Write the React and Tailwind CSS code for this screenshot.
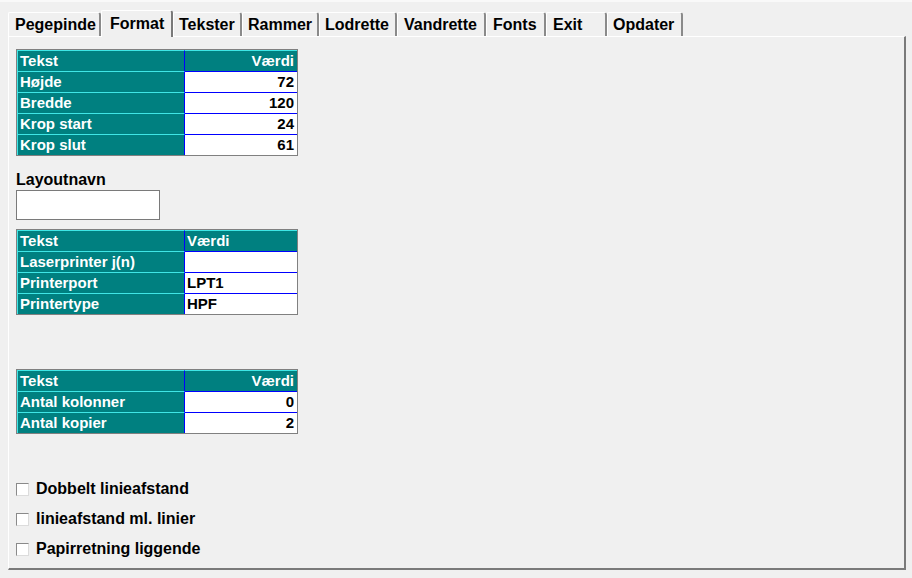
import React from "react";

const tabs = [
  { label: "Pegepinde", w: "w-[93px]", pl: "pl-[6px]" },
  { label: "Format", w: "w-[72px]", pl: "pl-[8px]", selected: true },
  { label: "Tekster", w: "w-[69px]", pl: "pl-[5px]" },
  { label: "Rammer", w: "w-[77px]", pl: "pl-[5px]" },
  { label: "Lodrette", w: "w-[78px]", pl: "pl-[5px]" },
  { label: "Vandrette", w: "w-[89px]", pl: "pl-[6px]" },
  { label: "Fonts", w: "w-[60px]", pl: "pl-[6px]" },
  { label: "Exit", w: "w-[61px]", pl: "pl-[6px]" },
  { label: "Opdater", w: "w-[76px]", pl: "pl-[5px]" },
];

function Tab({ label, w, pl, selected }) {
  if (selected) {
    return (
      <div
        className={`${w} ${pl} h-[27px] -mb-[1px] pt-[1px] bg-[#f0f0f0] border-t border-l border-white border-r-2 border-r-[#7a7a7a] rounded-tl-[2px] rounded-tr-[3px] relative z-10`}
      >
        <span className="text-[16px] leading-[18px] font-bold text-black">{label}</span>
      </div>
    );
  }
  return (
    <div
      className={`${w} ${pl} h-[24px] pt-[0px] bg-[#f0f0f0] border-t border-l border-white border-r-2 border-r-[#8a8a8a] rounded-tl-[2px] rounded-tr-[3px]`}
    >
      <span className="text-[16px] leading-[18px] font-bold text-black">{label}</span>
    </div>
  );
}

function Table({ rows, headerAlign = "right", valueAlign = "right" }) {
  const all = [{ k: "Tekst", v: "Værdi", header: true }, ...rows];
  return (
    <div className="w-[282px] border border-[#808080] grid grid-cols-[168px_112px] text-[15px] leading-[20px] font-bold">
      {all.map((r, i) => (
        <React.Fragment key={i}>
          <div className="bg-[#008080] text-white border-t border-l border-[#3fe6e6] border-r border-r-[#0000ff] pl-[2px] h-[21px] whitespace-nowrap overflow-hidden">
            {r.k}
          </div>
          <div
            className={`h-[21px] border-t whitespace-nowrap overflow-hidden ${
              r.header
                ? "bg-[#008080] text-white border-[#3fe6e6]"
                : "bg-white text-black border-[#0000ff]"
            } ${
              (r.header ? headerAlign : valueAlign) === "right"
                ? "text-right pr-[3px]"
                : "text-left pl-[2px]"
            }`}
          >
            {r.v}
          </div>
        </React.Fragment>
      ))}
    </div>
  );
}

function Check({ label }) {
  return (
    <div className="flex items-center h-[18px]">
      <div className="w-[13px] h-[13px] bg-white border border-t-[#8a8a8a] border-l-[#8a8a8a] border-r-[#dcdcdc] border-b-[#dcdcdc]" />
      <span className="ml-[7px] text-[16px] leading-[18px] font-bold text-black whitespace-nowrap">
        {label}
      </span>
    </div>
  );
}

export default function App() {
  return (
    <div
      className="w-[912px] h-[578px] bg-[#f0f0f0] overflow-hidden border-t-2 border-[#f9f9f9]"
      style={{ fontFamily: '"Liberation Sans", Arial, sans-serif' }}
    >
      <div className="flex items-end pl-[8px] pt-[8px] h-[34px]">
        {tabs.map((t) => (
          <Tab key={t.label} {...t} />
        ))}
      </div>
      <div className="ml-[8px] w-[898px] h-[534px] border-t border-l border-white border-r-2 border-b-2 border-r-[#7a7a7a] border-b-[#7a7a7a] pl-[7px] pt-[12px]">
        <Table
          rows={[
            { k: "Højde", v: "72" },
            { k: "Bredde", v: "120" },
            { k: "Krop start", v: "24" },
            { k: "Krop slut", v: "61" },
          ]}
        />
        <div className="mt-[15px] text-[16px] leading-[18px] font-bold text-black">Layoutnavn</div>
        <div className="mt-[1px] w-[144px] h-[30px] bg-white border border-[#7a7a7a]" />
        <div className="mt-[9px]">
          <Table
            headerAlign="left"
            valueAlign="left"
            rows={[
              { k: "Laserprinter j(n)", v: "" },
              { k: "Printerport", v: "LPT1" },
              { k: "Printertype", v: "HPF" },
            ]}
          />
        </div>
        <div className="mt-[54px]">
          <Table
            rows={[
              { k: "Antal kolonner", v: "0" },
              { k: "Antal kopier", v: "2" },
            ]}
          />
        </div>
        <div className="mt-[46px] flex flex-col gap-[12px]">
          <Check label="Dobbelt linieafstand" />
          <Check label="linieafstand ml. linier" />
          <Check label="Papirretning liggende" />
        </div>
      </div>
    </div>
  );
}
